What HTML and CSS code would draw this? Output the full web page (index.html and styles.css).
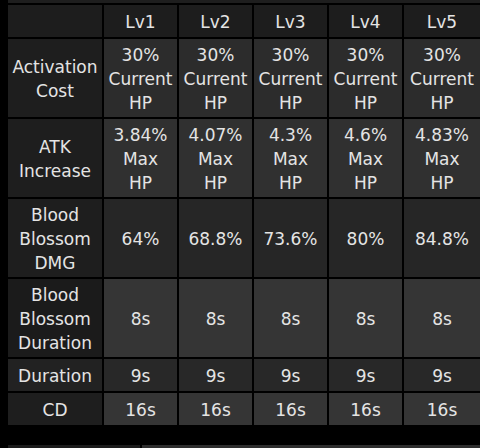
FILE: index.html
```html
<!DOCTYPE html>
<html>
<head>
<meta charset="utf-8">
<link rel="stylesheet" href="styles.css">
</head>
<body>
<div class="page">
  <div class="top-strip"></div>
  <div class="grid">
    <div class="cell head-l"></div>
    <div class="cell head">Lv1</div>
    <div class="cell head">Lv2</div>
    <div class="cell head">Lv3</div>
    <div class="cell head">Lv4</div>
    <div class="cell head">Lv5</div>

    <div class="cell label">Activation<br>Cost</div>
    <div class="cell r1">30%<br>Current<br>HP</div>
    <div class="cell r1">30%<br>Current<br>HP</div>
    <div class="cell r1">30%<br>Current<br>HP</div>
    <div class="cell r1">30%<br>Current<br>HP</div>
    <div class="cell r1">30%<br>Current<br>HP</div>

    <div class="cell label">ATK<br>Increase</div>
    <div class="cell r2">3.84%<br>Max<br>HP</div>
    <div class="cell r2">4.07%<br>Max<br>HP</div>
    <div class="cell r2">4.3%<br>Max<br>HP</div>
    <div class="cell r2">4.6%<br>Max<br>HP</div>
    <div class="cell r2">4.83%<br>Max<br>HP</div>

    <div class="cell label">Blood<br>Blossom<br>DMG</div>
    <div class="cell r3">64%</div>
    <div class="cell r3">68.8%</div>
    <div class="cell r3">73.6%</div>
    <div class="cell r3">80%</div>
    <div class="cell r3">84.8%</div>

    <div class="cell label dark">Blood<br>Blossom<br>Duration</div>
    <div class="cell r4">8s</div>
    <div class="cell r4">8s</div>
    <div class="cell r4">8s</div>
    <div class="cell r4">8s</div>
    <div class="cell r4">8s</div>

    <div class="cell label mid">Duration</div>
    <div class="cell r5">9s</div>
    <div class="cell r5">9s</div>
    <div class="cell r5">9s</div>
    <div class="cell r5">9s</div>
    <div class="cell r5">9s</div>

    <div class="cell label">CD</div>
    <div class="cell r6">16s</div>
    <div class="cell r6">16s</div>
    <div class="cell r6">16s</div>
    <div class="cell r6">16s</div>
    <div class="cell r6">16s</div>
  </div>
  <div class="next-table">
    <div class="next-l"></div>
    <div class="next-r"></div>
  </div>
</div>
</body>
</html>
```
FILE: styles.css
```css
html, body {
  margin: 0;
  padding: 0;
  background: #000;
}
.page {
  width: 480px;
  height: 448px;
  overflow: hidden;
  padding-left: 8px;
  box-sizing: border-box;
  font-family: "DejaVu Sans", sans-serif;
  font-size: 17px;
  line-height: 24px;
  color: #e4e4e4;
}
.top-strip {
  height: 3px;
  background: #1e1e1e;
  margin-bottom: 2px;
}
.grid {
  display: grid;
  grid-template-columns: 94px 73px 73px 73px 73px 76px;
  gap: 2px;
}
.cell {
  min-height: 32px;
  padding: 4px 0 2px;
  box-sizing: border-box;
  display: flex;
  align-items: center;
  justify-content: center;
  text-align: center;
}
.head-l, .head { background: #1d1d1d; }
.label { background: #1e1e1e; }
.label.dark { background: #1b1b1b; }
.label.mid { background: #222222; }
.r1 { background: #2c2c2c; }
.r2 { background: #303030; }
.r3 { background: #262626; }
.r4 { background: #353535; }
.r5 { background: #282828; }
.r6 { background: #353535; }
.next-table {
  display: flex;
  gap: 2px;
  margin-top: 20px;
  height: 10px;
}
.next-l {
  width: 132px;
  background: #1c1c1c;
}
.next-r {
  flex: 1;
  background: #2e2e2e;
}
```
